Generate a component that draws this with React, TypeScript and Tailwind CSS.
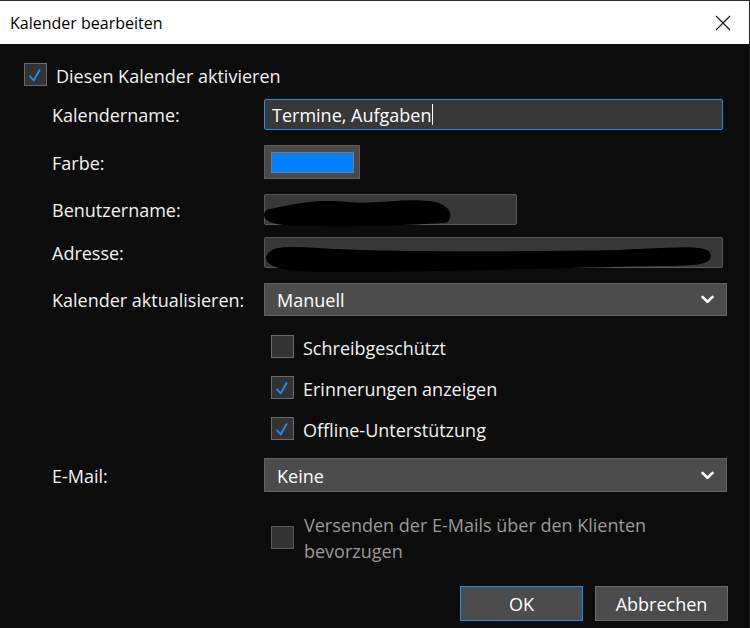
import React from 'react';

const font = { fontFamily: '"Open Sans", "Noto Sans", sans-serif' };

const Check = () => (
  <svg viewBox="0 0 23 23" className="h-full w-full">
    <path d="M5.5 13.5 L9.5 18 L16 6.5" fill="none" stroke="#1f8ef1" strokeWidth="2" strokeLinecap="round" strokeLinejoin="round" />
  </svg>
);

const Box = ({ checked, dim }: { checked?: boolean; dim?: boolean }) => (
  <div className={`h-[23px] w-[23px] shrink-0 border ${dim ? 'border-[#5a5a5a]' : 'border-[#6b6b6b]'} bg-[#333333]`}>
    {checked && <Check />}
  </div>
);

const Chevron = () => (
  <svg width="13" height="9" viewBox="0 0 13 9" className="shrink-0">
    <path d="M1.5 1.8 L6.5 6.8 L11.5 1.8" fill="none" stroke="#ffffff" strokeWidth="2.6" strokeLinecap="round" strokeLinejoin="round" />
  </svg>
);

const Label = ({ children }: { children: React.ReactNode }) => (
  <div className="w-[212px] shrink-0 pt-[2px] text-[18px] text-[#f2f2f2]">{children}</div>
);

const Select = ({ value }: { value: string }) => (
  <div className="flex h-full w-[463px] items-center justify-between border border-[#616161] bg-[#4c4c4c] pl-[12px] pr-[12px] text-[18px] text-white">
    <span className="pt-[2px]">{value}</span>
    <Chevron />
  </div>
);

const CheckRow = ({ label, checked }: { label: string; checked?: boolean }) => (
  <div className="flex h-[23px] items-center pl-[271px]">
    <Box checked={checked} />
    <span className="ml-[9px] pt-[3px] text-[18px] text-[#f2f2f2]">{label}</span>
  </div>
);

export default function App() {
  return (
    <div className="flex h-[628px] w-[750px] overflow-hidden bg-[#0c0c0c]" style={font}>
      <div className="flex h-full w-[749px] flex-col border-t border-[#2e2e2e]">
        {/* title bar */}
        <div className="flex h-[43px] shrink-0 items-center justify-between bg-white pl-[10px] pr-[18px]">
          <span className="text-[16px] text-black">Kalender bearbeiten</span>
          <svg width="16" height="16" viewBox="0 0 16 16">
            <path d="M1 1 L15 15 M15 1 L1 15" stroke="#111" strokeWidth="1.1" />
          </svg>
        </div>

        {/* main toggle */}
        <div className="mt-[19px] flex h-[23px] items-center pl-[24px]">
          <Box checked />
          <span className="ml-[9px] pt-[3px] text-[18px] text-[#f2f2f2]">Diesen Kalender aktivieren</span>
        </div>

        <div className="mt-[13px] flex h-[31px] items-center pl-[52px]">
          <Label>Kalendername:</Label>
          <div className="flex h-full w-[459px] items-center rounded-[2px] border border-[#1f8ef1] bg-[#383838] pl-[7px] text-[18px] text-white">
            <span className="pt-[1px]">Termine, Aufgaben</span>
            <span className="ml-[1px] h-[21px] w-px bg-white" />
          </div>
        </div>

        <div className="mt-[15px] flex h-[34px] items-center pl-[52px]">
          <Label>Farbe:</Label>
          <div className="flex h-full w-[96px] items-center justify-center border border-[#5c5c5c] bg-[#494949]">
            <div className="h-[21px] w-[83px] border border-[#7a7a7a] bg-[#0080ff]" />
          </div>
        </div>

        <div className="mt-[15px] flex h-[31px] items-center pl-[52px]">
          <Label>Benutzername:</Label>
          <div className="relative h-full w-[253px] rounded-[2px] border border-[#585858] bg-[#383838]">
            <svg className="absolute left-[-7px] top-[4px]" width="200" height="28" viewBox="0 0 200 28">
              <path d="M12 16 C40 10 60 6 90 9 C120 12 140 5 170 8 C182 9 188 14 186 18 C150 20 100 22 60 21 C35 21 18 21 12 16 Z" fill="#000" stroke="#000" strokeWidth="12" strokeLinejoin="round" />
            </svg>
          </div>
        </div>

        <div className="mt-[12px] flex h-[31px] items-center pl-[52px]">
          <Label>Adresse:</Label>
          <div className="relative h-full w-[459px] rounded-[2px] border border-[#585858] bg-[#383838]">
            <svg className="absolute left-[-7px] top-[4px]" width="460" height="30" viewBox="0 0 460 30">
              <path d="M12 16 C14 8 30 8 60 10 C120 14 250 14 360 12 C410 10 440 7 448 12 C452 18 440 20 400 20 C300 22 180 26 80 26 C40 26 14 24 12 16 Z" fill="#000" stroke="#000" strokeWidth="8" strokeLinejoin="round" />
            </svg>
          </div>
        </div>

        <div className="mt-[15px] flex h-[33px] items-center pl-[52px]">
          <Label>Kalender aktualisieren:</Label>
          <Select value="Manuell" />
        </div>

        <div className="mt-[19px]">
          <CheckRow label="Schreibgeschützt" />
        </div>
        <div className="mt-[18px]">
          <CheckRow label="Erinnerungen anzeigen" checked />
        </div>
        <div className="mt-[18px]">
          <CheckRow label="Offline-Unterstützung" checked />
        </div>

        <div className="mt-[18px] flex h-[34px] items-center pl-[52px]">
          <Label>E-Mail:</Label>
          <Select value="Keine" />
        </div>

        <div className="mt-[19px] flex items-center pl-[271px]">
          <Box dim />
          <div className="ml-[10px] w-[390px] pt-[1px] text-[18px] leading-[26px] text-[#9a9a9a]">
            Versenden der E-Mails über den Klienten bevorzugen
          </div>
        </div>

        <div className="mt-auto mb-[7px] flex justify-end gap-[12px] pr-[21px]">
          <button className="h-[35px] w-[123px] border border-[#1f8ef1] bg-[#4c4c4c] pt-[2px] text-[18px] text-white">OK</button>
          <button className="h-[35px] w-[133px] border border-[#6a6a6a] bg-[#4c4c4c] pt-[2px] text-[18px] text-white">Abbrechen</button>
        </div>
      </div>
      <div className="h-full w-px bg-[#1e1e1e]" />
    </div>
  );
}
